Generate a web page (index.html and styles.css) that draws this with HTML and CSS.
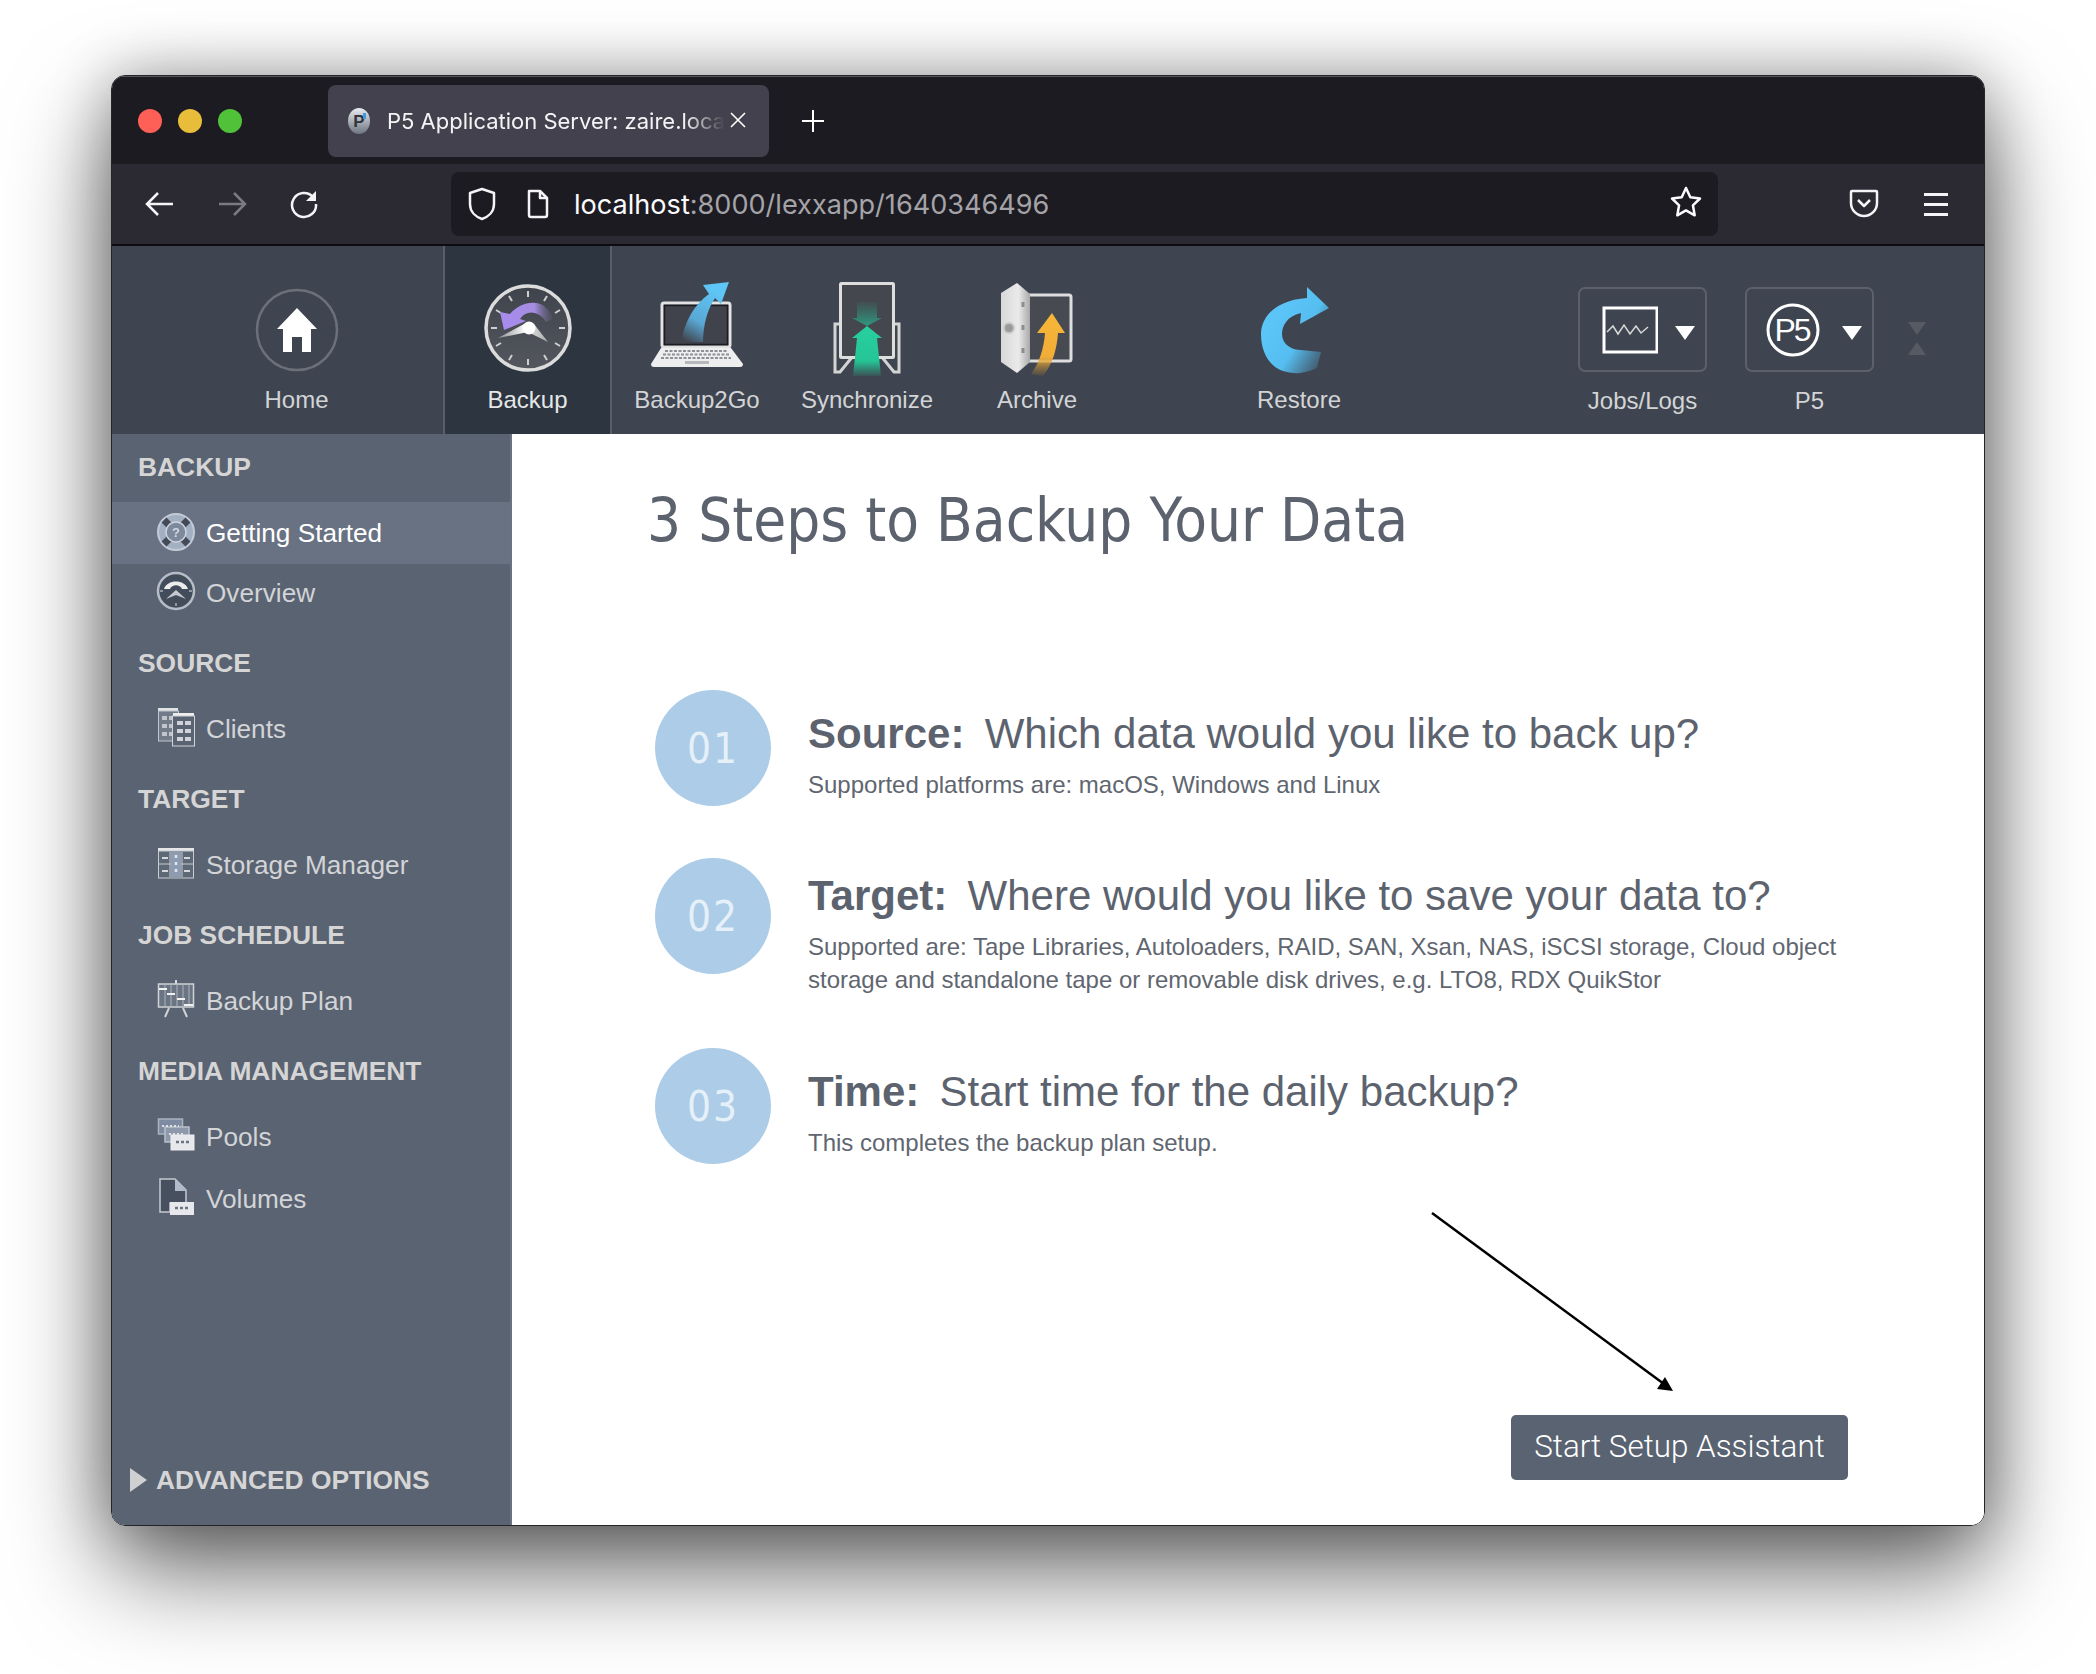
FILE: index.html
```html
<!DOCTYPE html>
<html lang="en">
<head>
<meta charset="utf-8">
<title>P5 Application Server</title>
<link rel="stylesheet" href="styles.css">
</head>
<body>
<div class="window">
  <header class="tabbar">
    <div class="lights"><span class="light red"></span><span class="light yellow"></span><span class="light green"></span></div>
    <div class="tab">
      <svg class="favicon" viewBox="0 0 24 28"><defs><linearGradient id="fav" x1="0" y1="0" x2="0" y2="1"><stop offset="0" stop-color="#e8ebef"/><stop offset="1" stop-color="#6d7682"/></linearGradient></defs><ellipse cx="12" cy="14" rx="11" ry="13" fill="url(#fav)"/><text x="12" y="20" text-anchor="middle" class="fav-text">P</text><rect x="16" y="6" width="3" height="6" fill="#3c9be0"/></svg>
      <span class="tab-title">P5 Application Server: zaire.local</span>
      <svg class="tab-close" viewBox="0 0 16 16"><path d="M1 1l14 14M15 1L1 15"/></svg>
    </div>
    <svg class="newtab" viewBox="0 0 24 24"><path d="M12 1v22M1 12h22"/></svg>
  </header>

  <nav class="navbar">
    <svg class="nav-icon" viewBox="0 0 30 30"><path d="M28 15H2M13 4L2 15l11 11"/></svg>
    <svg class="nav-icon dim" viewBox="0 0 30 30"><path d="M2 15h26M17 4l11 11-11 11"/></svg>
    <svg class="nav-icon" viewBox="0 0 30 30"><path d="M24 8A12 12 0 1 0 27 15"/><path class="solid" d="M27 2v10H17z"/></svg>
    <div class="urlbar">
      <svg class="url-shield" viewBox="0 0 28 34"><path d="M14 2l12 4v11c0 8-6 13-12 15C8 30 2 25 2 17V6z"/></svg>
      <svg class="url-page" viewBox="0 0 24 30"><path d="M3 2h11l7 7v17a2 2 0 0 1-2 2H5a2 2 0 0 1-2-2z"/><path d="M14 2v7h7"/></svg>
      <span class="url-text"><span class="url-host">localhost</span>:8000/lexxapp/1640346496</span>
      <svg class="url-star" viewBox="0 0 32 32"><path d="M16 2l4.300 9.200 9.700 1.300-7.100 6.800 1.800 10L16 24.400l-8.700 4.900 1.800-10L2 12.500l9.700-1.300z"/></svg>
    </div>
    <svg class="pocket" viewBox="0 0 30 32"><path d="M3 3h24a1 1 0 0 1 1 1v11a13 13 0 0 1-26 0V4a1 1 0 0 1 1-1z"/><path d="M9 12l6 6 6-6"/></svg>
    <div class="hamburger"><span></span><span></span><span></span></div>
  </nav>

  <div class="apptools">
    <a class="tool tool-home">
      <svg class="tool-icon" viewBox="0 0 120 100"><circle cx="60" cy="50" r="40" fill="none" stroke="#6b7079" stroke-width="2.500"/><path d="M60 28L80 49H74V72H65V57H55V72H46V49H40Z" fill="#fff"/></svg>
      <span class="tool-label">Home</span>
    </a>
    <a class="tool tool-active">
      <svg class="tool-icon" viewBox="0 0 120 100">
        <defs><linearGradient id="dial" x1="0" y1="0" x2="0" y2="1"><stop offset="0" stop-color="#3f434c"/><stop offset="1" stop-color="#54575e"/></linearGradient>
        <linearGradient id="purple" x1="0" y1="0" x2="1" y2="0"><stop offset="0" stop-color="#a78bf0"/><stop offset=".65" stop-color="#a58de0"/><stop offset="1" stop-color="#6f6a88" stop-opacity=".1"/></linearGradient>
        <linearGradient id="hands" x1="0" y1="0" x2="1" y2="0"><stop offset="0" stop-color="#8c8e92"/><stop offset=".5" stop-color="#f2f2f2"/><stop offset="1" stop-color="#a8a9ac"/></linearGradient></defs>
        <circle cx="60" cy="48" r="42" fill="url(#dial)" stroke="#dcdcdc" stroke-width="3.500"/>
        <path d="M60 11v6M60 79v6M23 48h6M91 48h6M41 16l3 5M79 16l-3 5M28 30l5 3M92 30l-5 3M28 66l5-3M92 66l-5-3M41 80l3-5M79 80l-3-5" stroke="#cfcfcf" stroke-width="2"/>
        <path d="M36 50L32 32L42 34C50 24 66 19 76 26C81 30 84 34 85 39L78 42C74 35 66 31 60 33C56 34 54 36 52 39L58 41Z" fill="url(#purple)"/>
        <path d="M30 58L56 44L66 44L80 62L60 52Z" fill="url(#hands)"/><circle cx="61" cy="48" r="6.500" fill="#fff"/>
      </svg>
      <span class="tool-label">Backup</span>
    </a>
    <a class="tool">
      <svg class="tool-icon" viewBox="0 0 120 100">
        <defs><linearGradient id="bluearrow" gradientUnits="userSpaceOnUse" x1="80" y1="12" x2="50" y2="62"><stop offset="0" stop-color="#5ec6f6"/><stop offset=".6" stop-color="#59a8d4"/><stop offset="1" stop-color="#59a8d4" stop-opacity="0"/></linearGradient></defs>
        <rect x="25" y="23" width="68" height="44" rx="2" fill="#40434c" stroke="#e2e2e2" stroke-width="3"/>
        <rect x="27.500" y="25.500" width="63" height="39" fill="#40434c" stroke="#1b1d22" stroke-width="1.500"/>
        <path d="M24 68H94L106 84Q106 87 103 87H17Q14 87 14 84Z" fill="#eeeeee"/>
        <path d="M28 71H90M26 74.500H92M24 78H94" stroke="#8d9096" stroke-width="2" stroke-dasharray="3 1.500"/>
        <rect x="48" y="81" width="24" height="3" fill="#b6b8bb"/>
        <path d="M44 62C48 40 58 24 72 14L66 5L92 2L84 24L78 18C70 30 66 46 66 62Z" fill="url(#bluearrow)"/>
      </svg>
      <span class="tool-label">Backup2Go</span>
    </a>
    <a class="tool">
      <svg class="tool-icon" viewBox="0 0 120 100">
        <defs><linearGradient id="greenup" x1="0" y1="0" x2="0" y2="1"><stop offset="0" stop-color="#28d09e"/><stop offset=".7" stop-color="#25c596"/><stop offset="1" stop-color="#25c596" stop-opacity=".1"/></linearGradient>
        <linearGradient id="greendown" x1="0" y1="0" x2="0" y2="1"><stop offset="0" stop-color="#2f8c78" stop-opacity=".1"/><stop offset="1" stop-color="#2e9a80"/></linearGradient></defs>
        <path d="M32 44H28V92H33L46 76M88 44H92V92H87L74 76" fill="none" stroke="#d4d4d4" stroke-width="3"/>
        <rect x="33.500" y="3.500" width="53" height="74" rx="1" fill="#45474f" stroke="#dedede" stroke-width="3"/>
        <path d="M50 22H70V38H75L60 46L45 38H50Z" fill="url(#greendown)"/>
        <path d="M60 46L75 58H70L74 96H46L50 58H45Z" fill="url(#greenup)"/>
      </svg>
      <span class="tool-label">Synchronize</span>
    </a>
    <a class="tool">
      <svg class="tool-icon" viewBox="0 0 120 100">
        <defs><linearGradient id="door" x1="0" y1="0" x2="1" y2="0"><stop offset="0" stop-color="#d8d8d8"/><stop offset=".6" stop-color="#eaeaea"/><stop offset="1" stop-color="#a9a9a9"/></linearGradient>
        <linearGradient id="orange" x1="0" y1="0" x2="0" y2="1"><stop offset="0" stop-color="#f8b638"/><stop offset=".7" stop-color="#f0ae38"/><stop offset="1" stop-color="#c08a30" stop-opacity=".1"/></linearGradient></defs>
        <rect x="50" y="15" width="44" height="66" rx="2" fill="#484a52" stroke="#dedede" stroke-width="3"/>
        <path d="M24 13L40 3L53 14V82L40 93L24 82Z" fill="url(#door)"/>
        <circle cx="32" cy="48" r="5" fill="#9a9a9a" stroke="#c8c8c8" stroke-width="2"/>
        <path d="M46 22v5M46 45v5M46 68v5" stroke="#8d8d8d" stroke-width="3"/>
        <path d="M75 33L88 53H81C80 68 76 84 66 96L54 94C62 84 67 68 68 53H60Z" fill="url(#orange)"/>
      </svg>
      <span class="tool-label">Archive</span>
    </a>
    <a class="tool tool-restore">
      <svg class="tool-icon" viewBox="0 0 120 100">
        <defs><linearGradient id="restore" gradientUnits="userSpaceOnUse" x1="30" y1="50" x2="88" y2="86"><stop offset="0" stop-color="#5cc5f8"/><stop offset=".45" stop-color="#55bdf0"/><stop offset="1" stop-color="#3f4550"/></linearGradient></defs>
        <path d="M68 7L90 28L61 44L62 33C48 36 43 46 43 54C43 64 52 70 62 70L82 72L78 88C65 94 55 94 48 92C30 88 22 72 22 54C22 36 38 20 68 18Z" fill="url(#restore)"/>
      </svg>
      <span class="tool-label">Restore</span>
    </a>
    <div class="tool-spacer"></div>
    <a class="tool tool-drop">
      <span class="dropbox">
        <svg class="drop-icon" viewBox="0 0 60 60"><rect x="6" y="8" width="53" height="44" fill="none" stroke="#fff" stroke-width="3"/><path d="M9 32l6-6 5 8 6-9 6 9 6-8 5 7 7-6" fill="none" stroke="#d8d8d8" stroke-width="1.500"/></svg>
        <span class="caret"></span>
      </span>
      <span class="tool-label">Jobs/Logs</span>
    </a>
    <a class="tool tool-drop">
      <span class="dropbox">
        <svg class="drop-icon" viewBox="0 0 60 60"><circle cx="28" cy="30" r="25" fill="none" stroke="#fff" stroke-width="3"/><text x="27" y="41" text-anchor="middle" class="p5-text">P5</text></svg>
        <span class="caret"></span>
      </span>
      <span class="tool-label">P5</span>
    </a>
    <div class="splitter"><span class="split-down"></span><span class="split-up"></span></div>
  </div>

  <div class="body">
    <aside class="sidebar">
      <h3 class="side-head side-first">BACKUP</h3>
      <a class="side-item selected">
        <svg class="side-icon" viewBox="0 0 40 40"><circle cx="20" cy="20" r="18" fill="#a3b0c4" stroke="#c2cad6" stroke-width="2"/><path d="M8 8l6 6M32 8l-6 6M8 32l6-6M32 32l-6-6" stroke="#434b58" stroke-width="7"/><circle cx="20" cy="20" r="10" fill="#7d899c" stroke="#cdd3dc" stroke-width="1.500"/><text x="20" y="25" text-anchor="middle" class="q-text">?</text></svg>
        <span>Getting Started</span>
      </a>
      <a class="side-item">
        <svg class="side-icon" viewBox="0 0 40 40"><circle cx="20" cy="20" r="18" fill="#434c5b" stroke="#b7bdc6" stroke-width="2.500"/><path d="M8 18C11 8 29 8 32 18L26 18C24 13 16 13 14 18Z" fill="#ececec"/><path d="M10 28L20 19L30 28L20 24Z" fill="#c6c9ce"/><path d="M20 32v3M4 20h3M33 20h3" stroke="#aab0b8" stroke-width="1.500"/></svg>
        <span>Overview</span>
      </a>
      <h3 class="side-head">SOURCE</h3>
      <a class="side-item">
        <svg class="side-icon" viewBox="0 0 40 40"><path d="M2 1h20v4H2z" fill="#e0e2e5"/><rect x="2.500" y="4" width="20" height="30" fill="#727b89" stroke="#c2c6cc"/><path d="M6 11h12M6 19h12M6 27h12" stroke="#c2c6cc" stroke-width="4" stroke-dasharray="5 2"/><path d="M17 6h21v4H17z" fill="#eceded"/><rect x="16.500" y="9" width="22" height="30" fill="#5a6371" stroke="#d0d3d7"/><path d="M21 16h14M21 24h14M21 32h14" stroke="#cfd2d6" stroke-width="4" stroke-dasharray="6 2"/></svg>
        <span>Clients</span>
      </a>
      <h3 class="side-head">TARGET</h3>
      <a class="side-item">
        <svg class="side-icon" viewBox="0 0 40 40"><rect x="2" y="5" width="36" height="4" fill="#e4e6e8"/><rect x="2.500" y="8" width="35" height="27" fill="#5f6876" stroke="#c8ccd1"/><path d="M14 9v25M26 9v25M3 21h34" stroke="#c8ccd1"/><rect x="15" y="9" width="10" height="25" fill="#8e9cb2"/><path d="M6 15h6M6 28h6M28 15h6M28 28h6" stroke="#d6d8db" stroke-width="2"/><path d="M20 12v3M20 19v3M20 26v3" stroke="#e2e5ea" stroke-width="2.500"/></svg>
        <span>Storage Manager</span>
      </a>
      <h3 class="side-head">JOB SCHEDULE</h3>
      <a class="side-item">
        <svg class="side-icon" viewBox="0 0 40 40"><path d="M20 1v4" stroke="#d8dadd" stroke-width="2"/><rect x="2.500" y="5" width="35" height="23" fill="#6a7483" stroke="#d0d3d7" stroke-width="1.500"/><path d="M9 5v23M15 5v23M21 5v23M27 5v23M33 5v23" stroke="#aeb4bc"/><path d="M3 10h8M11 15h8M21 20h8M28 26h9" stroke="#f2f2f2" stroke-width="2"/><path d="M13 29L9 38M27 29l4 9" stroke="#d0d3d7" stroke-width="2"/></svg>
        <span>Backup Plan</span>
      </a>
      <h3 class="side-head">MEDIA MANAGEMENT</h3>
      <a class="side-item">
        <svg class="side-icon" viewBox="0 0 40 40"><rect x="2.500" y="4" width="24" height="15" fill="#7f8ba0" stroke="#aab2c0" stroke-width="1.500"/><rect x="9" y="12" width="24" height="15" fill="#8d98ab" stroke="#b9c0cc" stroke-width="1.500"/><rect x="15" y="20" width="23" height="15" fill="#e6e8ec" stroke="#eceef0"/><path d="M6 11h17M13 19h16" stroke="#e0e2e6" stroke-width="2" stroke-dasharray="2 2"/><path d="M20 27h14" stroke="#6a7483" stroke-width="2.500" stroke-dasharray="3 2"/></svg>
        <span>Pools</span>
      </a>
      <a class="side-item">
        <svg class="side-icon" viewBox="0 0 40 40"><path d="M4 2H19L30 13V26H14V35H4Z" fill="#47505e" stroke="#c6cad0" stroke-width="1.500"/><path d="M19 2V14H30Z" fill="#b0bbcc"/><rect x="14" y="25" width="24" height="13" fill="#e6e8ec"/><path d="M19 31h14" stroke="#6a7483" stroke-width="2.500" stroke-dasharray="3 2"/></svg>
        <span>Volumes</span>
      </a>
      <div class="side-advanced"><span class="adv-arrow"></span><span class="adv-label">ADVANCED OPTIONS</span></div>
    </aside>

    <main class="main">
      <h1 class="page-title">3 Steps to Backup Your Data</h1>
      <section class="step">
        <div class="step-num">01</div>
        <div class="step-body">
          <h2 class="step-head"><b>Source:</b>&nbsp; Which data would you like to back up?</h2>
          <p class="step-sub">Supported platforms are: macOS, Windows and Linux</p>
        </div>
      </section>
      <section class="step step-tall">
        <div class="step-num">02</div>
        <div class="step-body">
          <h2 class="step-head"><b>Target:</b>&nbsp; Where would you like to save your data to?</h2>
          <p class="step-sub">Supported are: Tape Libraries, Autoloaders, RAID, SAN, Xsan, NAS, iSCSI storage, Cloud object<br>storage and standalone tape or removable disk drives, e.g. LTO8, RDX QuikStor</p>
        </div>
      </section>
      <section class="step">
        <div class="step-num">03</div>
        <div class="step-body">
          <h2 class="step-head"><b>Time:</b>&nbsp; Start time for the daily backup?</h2>
          <p class="step-sub">This completes the backup plan setup.</p>
        </div>
      </section>
      <a class="start-btn">Start Setup Assistant</a>
      <svg class="pointer" viewBox="0 0 260 190"><path d="M8 4L240 175" fill="none" stroke="#000" stroke-width="2.500"/><path d="M249 182L233 180L241 168Z" fill="#000"/></svg>
    </main>
  </div>
</div>
</body>
</html>
```

FILE: styles.css
```css
* { box-sizing: border-box; }
html, body { margin: 0; padding: 0; background: #fff; }
body { height: 1674px; overflow: hidden; font-family: "Liberation Sans", Arial, sans-serif; }
h1, h2, h3, p { margin: 0; font-weight: normal; }

.window {
  width: 1874px;
  height: 1451px;
  margin: 75px 0 0 111px;
  display: flex;
  flex-direction: column;
  border-radius: 14px;
  overflow: hidden;
  border: 1px solid #23252b;
  box-shadow: 0 44px 100px rgba(0, 0, 0, .6), 0 0 60px rgba(0, 0, 0, .28);
}

/* tab strip */
.tabbar { height: 88px; flex: none; display: flex; align-items: center; background: #1c1b22; border-top: 1px solid #55565c; position: relative; }
.lights { display: flex; gap: 16px; margin-left: 26px; width: 190px; }
.light { width: 24px; height: 24px; border-radius: 50%; }
.red { background: #fe5f57; }
.yellow { background: #e7bd39; }
.green { background: #51c139; }
.tab { width: 441px; height: 72px; background: #42414d; border-radius: 8px; display: flex; align-items: center; position: relative; }
.favicon { width: 24px; height: 28px; margin-left: 19px; flex: none; }
.fav-text { font: bold 17px "Liberation Sans", sans-serif; fill: #30353d; }
.tab-title { margin-left: 16px; padding-top: 1px; width: 338px; font: 22px/30px Inter, "Liberation Sans", sans-serif; color: #f4f4f6; white-space: nowrap; overflow: hidden; -webkit-mask-image: linear-gradient(90deg, #000 88%, transparent 100%); mask-image: linear-gradient(90deg, #000 88%, transparent 100%); }
.tab-close { position: absolute; left: 402px; top: 27px; width: 16px; height: 16px; }
.tab-close path { stroke: #fff; stroke-width: 1.600; fill: none; }
.newtab { width: 24px; height: 24px; margin-left: 32px; }
.newtab path { stroke: #fff; stroke-width: 2; fill: none; }

/* navigation toolbar */
.navbar { height: 82px; flex: none; display: flex; align-items: center; background: #2b2a33; border-bottom: 2px solid #0c0c0e; padding-left: 33px; }
.nav-icon { width: 30px; height: 30px; margin-right: 42px; }
.nav-icon path { stroke: #f4f4f6; stroke-width: 2.500; fill: none; }
.nav-icon path.solid { fill: #f4f4f6; stroke: none; }
.nav-icon.dim path { stroke: #7b7a82; }
.urlbar { width: 1267px; height: 64px; margin-left: 90px; background: #1c1b22; border-radius: 8px; display: flex; align-items: center; padding-left: 17px; position: relative; }
.url-shield { width: 28px; height: 34px; }
.url-shield path, .url-page path { fill: none; stroke: #f4f4f6; stroke-width: 2.500; stroke-linejoin: round; }
.url-page { width: 24px; height: 30px; margin-left: 30px; }
.url-text { margin-left: 24px; padding-top: 2px; font: 27.100px/34px Inter, "Liberation Sans", sans-serif; color: #a4a4a8; white-space: nowrap; }
.url-host { color: #fbfbfe; }
.url-star { width: 32px; height: 32px; position: absolute; left: 1219px; top: 14px; }
.url-star path { fill: none; stroke: #fbfbfe; stroke-width: 2.500; stroke-linejoin: round; }
.pocket { width: 30px; height: 32px; margin-left: 131px; }
.pocket path { fill: none; stroke: #f4f4f6; stroke-width: 2.500; stroke-linejoin: round; }
.hamburger { width: 24px; margin-left: 45px; display: flex; flex-direction: column; gap: 7px; }
.hamburger span { height: 3px; background: #f4f4f6; display: block; }

/* application toolbar */
.apptools { height: 188px; flex: none; display: flex; background: #3f4550; padding-right: 72px; }
.tool { width: 170px; flex: none; display: flex; flex-direction: column; align-items: center; padding-top: 34px; }
.tool-home { width: 331px; padding-left: 38px; }
.tool-active { width: 169px; background: #2d3540; border-left: 2px solid #5a5f67; border-right: 2px solid #5a5f67; }
.tool-restore { margin-left: 92px; }
.tool-spacer { flex: 1; }
.tool-icon { width: 120px; height: 100px; flex: none; filter: blur(.5px); }
.tool-label { margin-top: 5px; font-size: 24px; line-height: 30px; color: #d2d4d6; white-space: nowrap; }
.tool-active .tool-label { color: #e4e6e8; }
.tool-drop { width: 129px; margin-right: 38px; padding-top: 41px; }
.dropbox { width: 129px; height: 85px; border: 2px solid #5b6069; border-radius: 7px; display: flex; align-items: center; padding-left: 18px; position: relative; margin-bottom: 9px; }
.drop-icon { width: 60px; height: 60px; flex: none; }
.p5-text { font: 32px "Liberation Sans", sans-serif; fill: #fff; letter-spacing: -2px; }
.caret { position: absolute; left: 95px; top: 37px; border-left: 10px solid transparent; border-right: 10px solid transparent; border-top: 14px solid #fff; }
.splitter { position: absolute; left: 1908px; top: 322px; display: flex; flex-direction: column; gap: 7px; }
.split-down { border-left: 9px solid transparent; border-right: 9px solid transparent; border-top: 13px solid #565b63; }
.split-up { border-left: 9px solid transparent; border-right: 9px solid transparent; border-bottom: 13px solid #565b63; }

/* body */
.body { flex: 1; display: flex; min-height: 0; }
.sidebar { width: 400px; flex: none; background: #5a6371; border-right: 2px solid #6b7380; display: flex; flex-direction: column; }
.side-head { height: 74px; padding-left: 26px; font-size: 26.400px; font-weight: bold; line-height: 74px; color: #d5d5d6; white-space: nowrap; }
.side-first { height: 68px; line-height: 66px; }
.side-item { height: 62px; display: flex; align-items: center; padding-left: 44px; padding-bottom: 4px; font-size: 26.200px; color: #d2d4d7; }
.side-item.selected { background: #687283; color: #fff; padding-bottom: 0; }
.side-icon { width: 40px; height: 40px; margin-right: 10px; margin-bottom: 4px; flex: none; filter: blur(.4px); }
.selected .side-icon { margin-bottom: 2px; }
.q-text { font: bold 13px "Liberation Sans", sans-serif; fill: #d5dae2; }
.side-advanced { margin-top: auto; margin-bottom: 26px; padding-left: 18px; display: flex; align-items: center; }
.adv-arrow { border-top: 12px solid transparent; border-bottom: 12px solid transparent; border-left: 17px solid #cfd0d2; margin-right: 9px; }
.adv-label { font-size: 26.400px; line-height: 38px; font-weight: bold; color: #d5d5d6; }

/* main */
.main { flex: 1; background: #fff; display: flex; flex-direction: column; position: relative; padding-left: 143px; }
.page-title { margin: 51px 0 0 -8px; height: 205px; font: 59.600px/72px "DejaVu Sans", sans-serif; font-stretch: condensed; color: #5c636e; white-space: nowrap; }
.step { display: flex; align-items: flex-start; margin-bottom: 52px; min-height: 116px; }
.step-num { width: 116px; height: 116px; flex: none; border-radius: 50%; background: #acCce7; color: #e6f0f8; display: flex; align-items: center; justify-content: center; font: 42px "DejaVu Sans", sans-serif; font-stretch: condensed; letter-spacing: 2px; }
.step-body { margin-left: 37px; padding-top: 19px; }
.step-tall .step-body { padding-top: 13px; }
.step-head { font-size: 42px; line-height: 50px; color: #5c636e; white-space: nowrap; }
.step-head b { font-weight: bold; margin-right: -3px; }
.step-sub { margin-top: 9px; font-size: 24px; line-height: 33px; color: #5f6670; white-space: nowrap; }
.start-btn { margin-top: auto; margin-bottom: 45px; margin-right: 136px; align-self: flex-end; width: 337px; height: 65px; background: #5a6371; border-radius: 5px; color: #fff; font: 300 31.400px/63px Roboto, "Liberation Sans", sans-serif; text-align: center; }
.pointer { position: absolute; left: 912px; top: 775px; width: 260px; height: 190px; }
```
